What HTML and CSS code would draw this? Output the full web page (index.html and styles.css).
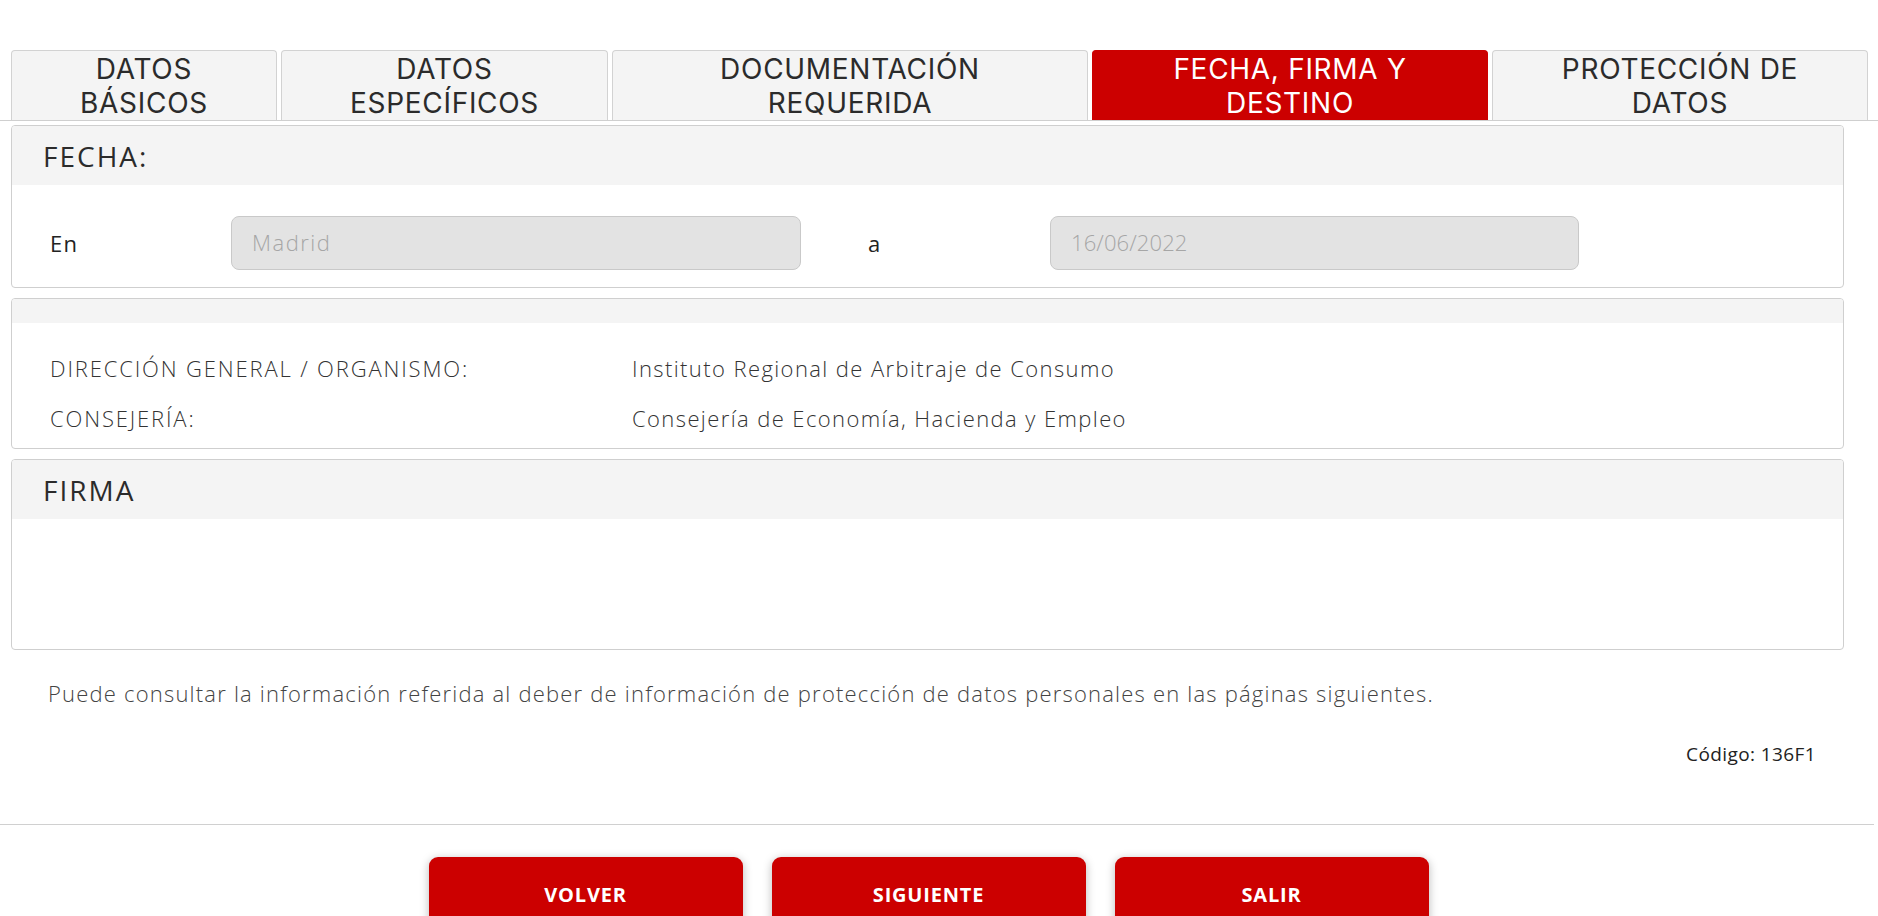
FILE: index.html
```html
<!DOCTYPE html>
<html lang="es">
<head>
<meta charset="utf-8">
<title>Fecha, firma y destino</title>
<link rel="stylesheet" href="styles.css">
</head>
<body>
<nav class="tabs">
  <div class="tab t1">DATOS<br>BÁSICOS</div>
  <div class="tab t2">DATOS<br>ESPECÍFICOS</div>
  <div class="tab t3">DOCUMENTACIÓN<br>REQUERIDA</div>
  <div class="tab t4 active">FECHA, FIRMA Y<br>DESTINO</div>
  <div class="tab t5">PROTECCIÓN DE<br>DATOS</div>
</nav>

<main class="content">
  <section class="panel">
    <div class="panel-head">FECHA:</div>
    <div class="panel-body date-row">
      <span class="lbl">En</span>
      <div class="field f-place">Madrid</div>
      <span class="lbl lbl-a">a</span>
      <div class="field f-date">16/06/2022</div>
    </div>
  </section>

  <section class="panel">
    <div class="panel-head empty"></div>
    <div class="panel-body info">
      <div class="info-row"><span class="k">DIRECCIÓN GENERAL / ORGANISMO:</span><span class="v">Instituto Regional de Arbitraje de Consumo</span></div>
      <div class="info-row"><span class="k">CONSEJERÍA:</span><span class="v">Consejería de Economía, Hacienda y Empleo</span></div>
    </div>
  </section>

  <section class="panel">
    <div class="panel-head">FIRMA</div>
    <div class="panel-body sign"></div>
  </section>

  <p class="note">Puede consultar la información referida al deber de información de protección de datos personales en las páginas siguientes.</p>
  <p class="code">Código: 136F1</p>
</main>

<hr class="sep">

<div class="actions">
  <button class="btn">VOLVER</button>
  <button class="btn">SIGUIENTE</button>
  <button class="btn">SALIR</button>
</div>
</body>
</html>
```

FILE: styles.css
```css
html, body {
  margin: 0;
  padding: 0;
  background: #fff;
}
body {
  font-family: "Open Sans", "Liberation Sans", sans-serif;
  color: #333;
  overflow: hidden;
  height: 916px;
}

.tabs {
  margin-top: 50px;
  display: grid;
  grid-template-columns: 266px 327px 476px 396px 376px;
  column-gap: 4px;
  padding-left: 11px;
  border-bottom: 1px solid #cfcfcf;
  height: 70px;
}
.tab {
  background: #f4f4f4;
  border: 1px solid #d2d2d2;
  border-bottom: none;
  border-radius: 4px 4px 0 0;
  text-align: center;
  font-family: "Inter", "Open Sans", sans-serif;
  font-size: 28px;
  font-weight: 440;
  line-height: 34px;
  letter-spacing: 0.7px;
  color: #2b2b2b;
  padding-top: 1px;
  box-sizing: border-box;
  white-space: nowrap;
}
.tab.active {
  background: #cc0000;
  border-color: #cc0000;
  color: #fff;
}

.content {
  padding: 4px 34px 0 11px;
}

.panel {
  border: 1px solid #cfcfcf;
  border-radius: 4px;
  margin-bottom: 10px;
  overflow: hidden;
}
.panel-head {
  background: #f4f4f4;
  height: 59px;
  line-height: 61px;
  padding-left: 31px;
  font-size: 28px;
  color: #2b2b2b;
  letter-spacing: 2px;
}
.panel-head.empty {
  height: 24px;
}

.date-row {
  display: grid;
  grid-template-columns: 181px 570px 249px 529px;
  align-items: center;
  padding: 31px 0 17px 38px;
}
.lbl {
  font-size: 22px;
  color: #222;
  letter-spacing: 1.4px;
}
.lbl-a {
  padding-left: 67px;
}
.field {
  height: 54px;
  box-sizing: border-box;
  background: #e3e3e3;
  border: 1px solid #c9c9c9;
  border-radius: 8px;
  padding-left: 20px;
  line-height: 50px;
  font-size: 22px;
  font-weight: 300;
  color: #a6a6a6;
}
.f-place {
  letter-spacing: 1.5px;
}
.f-date {
  letter-spacing: 0.1px;
}

.info {
  padding: 20px 0 5px 38px;
}
.info-row {
  display: grid;
  grid-template-columns: 582px 1fr;
  height: 50px;
  line-height: 50px;
  font-size: 22px;
  font-weight: 300;
  color: #333;
}
.info-row .k {
  letter-spacing: 1.85px;
}
.info-row .v {
  letter-spacing: 1.4px;
}

.sign {
  height: 130px;
}

.note {
  margin: 29px 0 0 37px;
  font-size: 22px;
  font-weight: 300;
  color: #444;
  letter-spacing: 1.2px;
  line-height: 28px;
}
.code {
  margin: 33px 28px 0 0;
  text-align: right;
  font-size: 19px;
  color: #222;
  line-height: 28px;
  letter-spacing: 0.4px;
}

.sep {
  margin: 56px 4px 0 0;
  border: none;
  border-top: 1px solid #d0d0d0;
  height: 0;
}

.actions {
  display: flex;
  justify-content: center;
  gap: 29px;
  padding: 32px 21px 0 0;
}
.btn {
  width: 314px;
  height: 78px;
  border: none;
  border-radius: 9px;
  background: #cc0000;
  color: #fff;
  font-family: "Open Sans", "Liberation Sans", sans-serif;
  font-size: 20px;
  font-weight: 700;
  letter-spacing: 0.8px;
  box-shadow: 0 2px 10px rgba(0, 0, 0, 0.28);
  padding: 0 0 3px;
}
```
